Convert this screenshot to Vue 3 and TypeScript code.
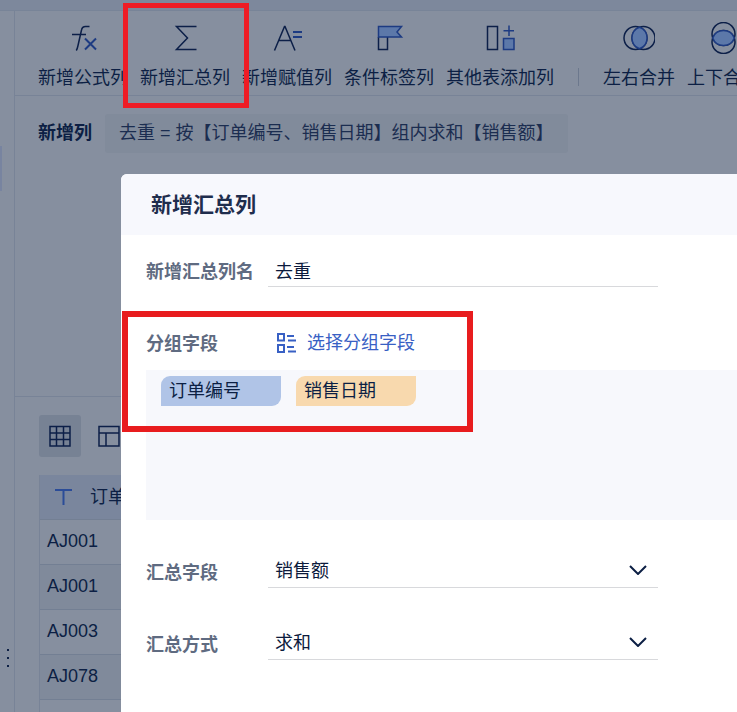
<script setup lang="ts">
import { ref } from 'vue'

interface Tool {
  id: string
  label: string
}

const columnTools: Tool[] = [
  { id: 'formula', label: '新增公式列' },
  { id: 'sum', label: '新增汇总列' },
  { id: 'assign', label: '新增赋值列' },
  { id: 'flag', label: '条件标签列' },
  { id: 'other', label: '其他表添加列' },
]
const mergeTools: Tool[] = [
  { id: 'merge-h', label: '左右合并' },
  { id: 'merge-v', label: '上下合并' },
]
const orders: string[] = ['AJ001', 'AJ001', 'AJ003', 'AJ078', '']

const columnName = ref('去重')
const sumField = ref('销售额')
const sumMethod = ref('求和')
</script>

<template>
  <div class="page">
    <div class="top-strip"></div>
    <div class="workspace">
      <aside class="sidebar">
        <span class="handle"></span>
        <span class="dots"><i></i><i></i><i></i></span>
      </aside>
      <main class="main">
        <nav class="toolbar">
          <button v-for="tool in columnTools" :key="tool.id" type="button" class="tool">
            <svg v-if="tool.id === 'formula'" class="tool-icon" viewBox="0 0 32 32">
              <path class="ink" d="M22.500 4.500h-4c-2.500 0-3.500 1-4 3.500l-3.500 15.500c-.4 2-1 4-1.700 5M5 12.500h14" />
              <path class="blue thick" d="M18 16.500l11 11M29 16.500l-11 11" />
            </svg>
            <svg v-else-if="tool.id === 'sum'" class="tool-icon" viewBox="0 0 32 32">
              <path class="ink" d="M27.500 4.500H7.500L18.500 16 7.500 27.500H27.500" />
            </svg>
            <svg v-else-if="tool.id === 'assign'" class="tool-icon" viewBox="0 0 32 32">
              <path class="ink" d="M3.500 28.500L13.500 4.500h.5L24 28.500M7.500 18.500h12.500" />
              <path class="blue thick" d="M22 10h9M22 15h9" />
            </svg>
            <svg v-else-if="tool.id === 'flag'" class="tool-icon" viewBox="0 0 32 32">
              <path class="ink" d="M5.500 15v12.500h9V15" />
              <path class="blue fill" d="M5.500 4.500h23l-4.500 5.500 4.500 5h-23z" />
            </svg>
            <svg v-else class="tool-icon" viewBox="0 0 32 32">
              <path class="ink" d="M3.500 4.500h10v23h-10z" />
              <path class="blue fill" d="M19.500 16.500h10.500v11h-10.500z" />
              <path class="blue" d="M25 3.500v10.500M19.500 8.700h10.500" />
            </svg>
            <span class="tool-label">{{ tool.label }}</span>
          </button>
          <span class="separator"></span>
          <button v-for="tool in mergeTools" :key="tool.id" type="button" class="tool">
            <svg v-if="tool.id === 'merge-h'" class="tool-icon" viewBox="0 0 32 32">
              <circle class="ink" cx="12.500" cy="16" r="11.500" />
              <circle class="ink" cx="20.500" cy="16" r="11.500" />
              <path class="blue fill" d="M16.500 5.200a11.500 11.500 0 0 1 0 21.600a11.500 11.500 0 0 1 0-21.600z" />
            </svg>
            <svg v-else class="tool-icon" viewBox="0 0 32 32">
              <circle class="ink" cx="16.500" cy="12" r="11.500" />
              <circle class="ink" cx="16.500" cy="20" r="11.500" />
              <path class="blue fill" d="M5.700 16a11.500 11.500 0 0 1 21.600 0a11.500 11.500 0 0 1-21.600 0z" />
            </svg>
            <span class="tool-label">{{ tool.label }}</span>
          </button>
        </nav>

        <section class="formula">
          <strong>新增列</strong>
          <span class="formula-text">去重 = 按【订单编号、销售日期】组内求和【销售额】</span>
        </section>

        <section class="data">
          <div class="views">
            <button type="button" class="view active" aria-label="表格">
              <svg class="view-icon" viewBox="0 0 22 22">
                <path class="ink" d="M1 1.500h20v19.500H1zM7.500 1.500V21M14.500 1.500V21M1 8h20M1 14.500h20" />
              </svg>
            </button>
            <button type="button" class="view" aria-label="布局">
              <svg class="view-icon" viewBox="0 0 22 22">
                <path class="ink" d="M1 1.500h20v19.500H1zM1 8h20M8 8v13" />
              </svg>
            </button>
          </div>
          <table class="orders">
            <thead>
              <tr>
                <th scope="col">
                  <span class="head-cell">
                    <svg class="type-icon" viewBox="0 0 18 18"><path class="type" d="M0 2h17M8.500 2v15" /></svg>
                    订单编号
                  </span>
                </th>
              </tr>
            </thead>
            <tbody>
              <tr v-for="(order, i) in orders" :key="i"><td>{{ order }}</td></tr>
            </tbody>
          </table>
        </section>
      </main>
    </div>

    <div class="dialog" role="dialog" aria-labelledby="dialog-title">
      <header class="dialog-head"><h2 id="dialog-title">新增汇总列</h2></header>
      <form class="dialog-body" @submit.prevent>
        <div class="row">
          <label for="column-name">新增汇总列名</label>
          <input id="column-name" v-model="columnName" class="control" type="text" />
        </div>
        <div class="group">
          <div class="row">
            <span class="row-title">分组字段</span>
            <button type="button" class="pick">
              <svg class="pick-icon" viewBox="0 0 20 20">
                <path d="M2 1h6v6.500H2zM2 12h6v7H2zM11 3h7M12 7.500h8M11 14h7M12 18.500h8" />
              </svg>
              选择分组字段
            </button>
          </div>
          <div class="drop">
            <span class="tag">订单编号</span>
            <span class="tag date">销售日期</span>
          </div>
        </div>
        <div class="selects">
          <div class="row">
            <label for="sum-field">汇总字段</label>
            <div class="select">
              <select id="sum-field" v-model="sumField" class="control"><option>销售额</option></select>
              <svg class="chevron" viewBox="0 0 18 10"><path d="M1 1l8 8 8-8" /></svg>
            </div>
          </div>
          <div class="row">
            <label for="sum-method">汇总方式</label>
            <div class="select">
              <select id="sum-method" v-model="sumMethod" class="control"><option>求和</option></select>
              <svg class="chevron" viewBox="0 0 18 10"><path d="M1 1l8 8 8-8" /></svg>
            </div>
          </div>
        </div>
      </form>
    </div>

    <div class="mark mark-tool"></div>
    <div class="mark mark-group"></div>
  </div>
</template>

<style>
body {
  margin: 0;
}
</style>

<style scoped>
* {
  box-sizing: border-box;
}
.page {
  position: relative;
  display: flex;
  flex-direction: column;
  height: 100vh;
  overflow: hidden;
  background: #868f9f;
  color: #0c1f44;
  font: 18px/24px "Liberation Sans", "Noto Sans CJK SC", sans-serif;
}
button,
input,
select {
  margin: 0;
  padding: 0;
  border: 0;
  border-radius: 0;
  background: none;
  color: inherit;
  font: inherit;
}
button {
  cursor: pointer;
}
svg {
  display: block;
  flex: none;
  fill: none;
}
.top-strip {
  flex: none;
  height: 11px;
  border-bottom: 1px solid #788498;
  background: #7d889c;
}
.workspace {
  display: flex;
  flex: 1;
  min-height: 0;
}
.sidebar {
  display: flex;
  flex: none;
  flex-direction: column;
  justify-content: space-between;
  width: 15px;
  padding: 135px 0 45px;
  border-right: 1px solid #788397;
}
.handle {
  width: 2px;
  height: 45px;
  background: #7884a0;
}
.dots {
  display: flex;
  flex-direction: column;
  gap: 6px;
  padding-left: 7px;
}
.dots i {
  width: 2px;
  height: 2px;
  background: #0c1f44;
}
.main {
  flex: 1;
  min-width: 0;
}
.toolbar {
  display: flex;
  align-items: flex-end;
  gap: 12px;
  padding: 11px 0 5px 23px;
  border-bottom: 1px solid #788397;
}
.tool {
  display: flex;
  flex: none;
  flex-direction: column;
  align-items: center;
  gap: 12px;
}
.tool-label {
  white-space: nowrap;
}
.tool-icon {
  width: 32px;
  height: 32px;
}
.ink {
  stroke: #0c1f48;
  stroke-width: 1.5;
}
.blue {
  stroke: #1d3b82;
  stroke-width: 1.5;
}
.thick {
  stroke-width: 2;
}
.fill {
  fill: #5c78a9;
}
.separator {
  flex: none;
  width: 1px;
  height: 18px;
  margin: 0 12px 4px;
  background: #6c788d;
}
.formula {
  display: flex;
  align-items: flex-start;
  gap: 13px;
  height: 300px;
  padding: 18px 0 0 23px;
  white-space: nowrap;
}
.formula strong {
  line-height: 38px;
}
.formula-text {
  padding: 0 14px;
  border-radius: 3px;
  background: #818b9b;
  color: #1b2d50;
  line-height: 39px;
}
.data {
  padding: 18px 0 0 24px;
  border-top: 1px solid #788397;
}
.views {
  display: flex;
  gap: 7px;
  margin-bottom: 18px;
}
.view {
  display: grid;
  place-items: center;
  width: 42px;
  height: 42px;
  border-radius: 3px;
}
.view.active {
  background: #778294;
}
.view-icon {
  width: 22px;
  height: 22px;
}
.orders {
  width: 100%;
  border-collapse: separate;
  border-spacing: 0;
  border-left: 1px solid #788397;
}
.orders th,
.orders td {
  height: 45px;
  padding: 0 8px;
  border-bottom: 1px solid #737f93;
  font-weight: 400;
  text-align: left;
}
.orders td {
  padding: 0 7px 2px;
}
.orders th {
  background: #7a869d;
}
.orders tr:nth-child(even) td {
  background: #808a9b;
}
.head-cell {
  display: flex;
  align-items: center;
  gap: 17px;
  padding-left: 7px;
}
.type-icon {
  width: 18px;
  height: 18px;
}
.type {
  stroke: #2b4c98;
  stroke-width: 2;
}
.dialog {
  position: absolute;
  inset: 174px 0 0 121px;
  overflow: hidden;
  border-top-left-radius: 6px;
  background: #fff;
}
.dialog-head {
  padding: 17px 30px 16px;
  background: #f7f8fd;
}
.dialog-head h2 {
  margin: 0;
  color: #1f2d4d;
  font-size: 21px;
  line-height: 28px;
}
.dialog-body {
  padding: 19px 0 0 25px;
}
.row {
  display: grid;
  grid-template-columns: 122px minmax(0, 390px);
  align-items: center;
  color: #0c1a3c;
}
.row label,
.row-title {
  padding-top: 2px;
  color: #5f6b81;
  font-weight: 700;
}
.control {
  width: 100%;
  height: 33px;
  padding: 0 7px;
  border-bottom: 1px solid #d8d9dc;
  outline: 0;
  appearance: none;
}
.group {
  display: grid;
  gap: 11px;
  margin: 40px 0 35px;
}
.pick {
  display: flex;
  align-items: center;
  gap: 11px;
  height: 32px;
  padding-left: 8px;
  color: #3860c4;
}
.pick-icon {
  width: 20px;
  height: 20px;
  stroke: #3860c4;
  stroke-width: 2;
}
.drop {
  display: flex;
  align-items: flex-start;
  gap: 15px;
  height: 150px;
  padding: 6px 15px;
  background: #f7f8fc;
}
.tag {
  width: 120px;
  padding-left: 8px;
  border-radius: 9px 0;
  background: #b0c4e7;
  color: #0c1f44;
  line-height: 30px;
}
.tag.date {
  background: #f8d9ae;
}
.selects {
  display: grid;
  gap: 39px;
}
.select {
  display: grid;
  align-items: center;
}
.select > * {
  grid-area: 1 / 1;
}
.chevron {
  justify-self: end;
  width: 18px;
  height: 10px;
  margin: 0 11px 3px 0;
  stroke: #0c1f44;
  stroke-width: 2;
  pointer-events: none;
}
.mark {
  position: absolute;
  pointer-events: none;
}
.mark-tool {
  top: 3px;
  left: 123px;
  width: 126px;
  height: 105px;
  border: 5px solid #ee1c25;
}
.mark-group {
  top: 311px;
  left: 122px;
  width: 351px;
  height: 121px;
  border: 6px solid #e81c1e;
}
</style>
